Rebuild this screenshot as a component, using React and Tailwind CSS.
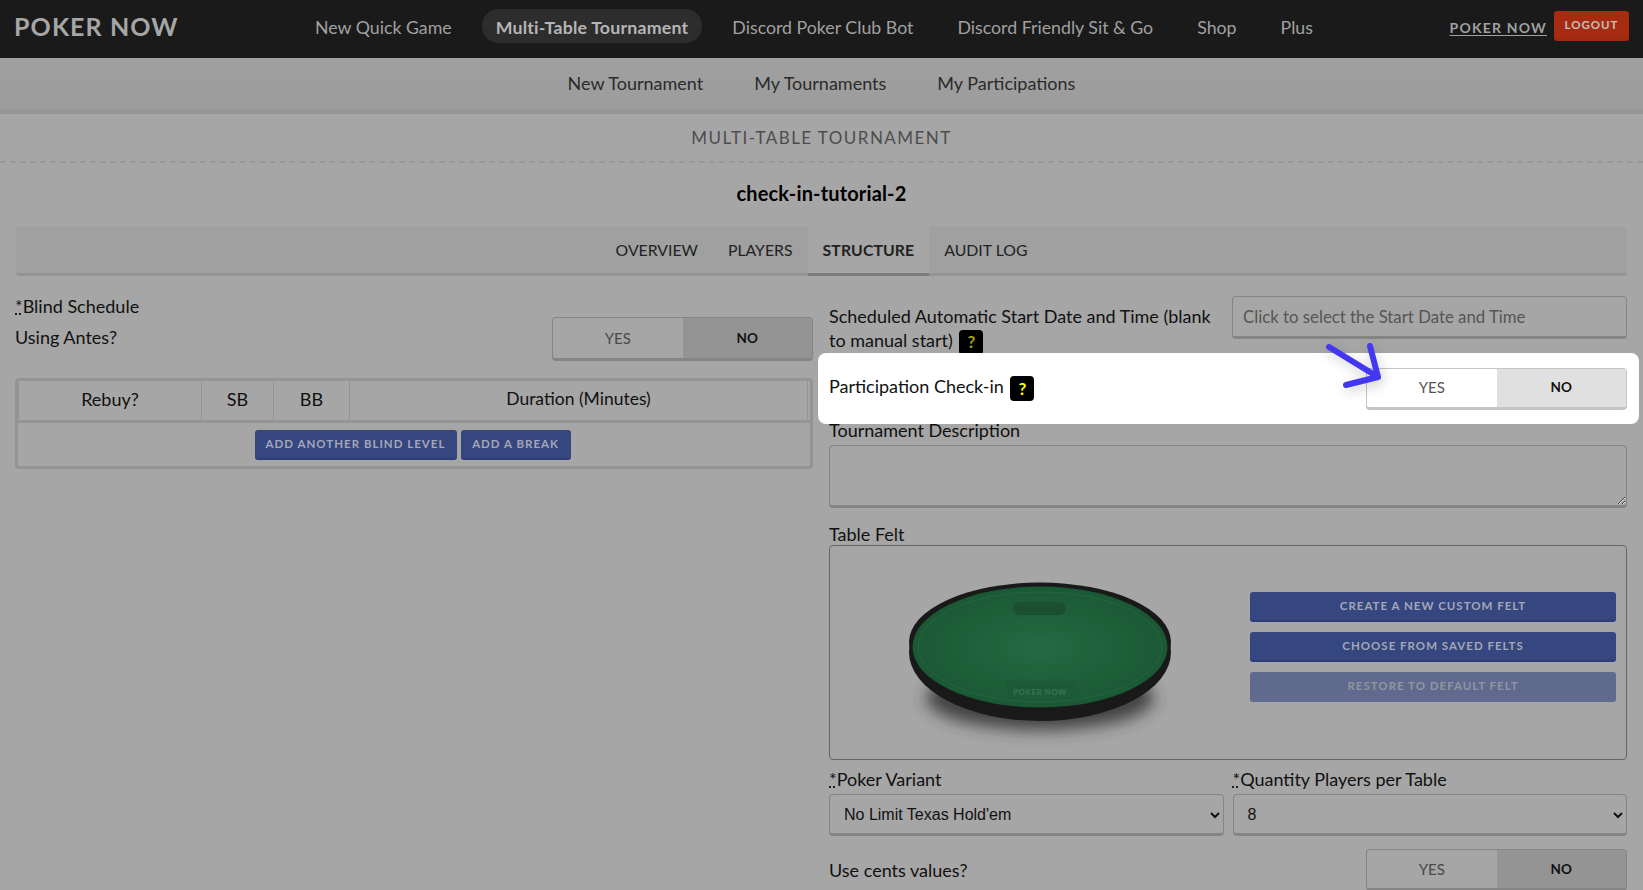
import { useState } from "react";

const navLinks = ["New Quick Game", "Multi-Table Tournament", "Discord Poker Club Bot", "Discord Friendly Sit & Go", "Shop", "Plus"];

function Toggle({ lit = false, tall = false }) {
  return (
    <div
      className={`flex w-[261px] shrink-0 overflow-hidden rounded-[4px] border border-b-[3px] ${tall ? "h-[44px]" : "h-[42px]"} ${lit ? "border-[#c4c4c4] text-[#555]" : "border-[#858585] text-[#4a4a4a]"}`}
    >
      <div className="flex flex-1 items-center justify-center text-[15px]">YES</div>
      <div className={`flex flex-1 items-center justify-center text-[13.5px] font-bold ${lit ? "bg-[#e0e0e0] text-[#111]" : "bg-[#949494] text-[#111]"}`}>NO</div>
    </div>
  );
}

function Help({ lit = false }) {
  return (
    <span className={`-my-[4px] ml-[2px] inline-flex h-[25px] w-[24px] items-center justify-center rounded-[4px] bg-black align-middle text-[17px] font-bold ${lit ? "text-[#ffff00]" : "text-[#a5a500]"}`}>?</span>
  );
}

function Req() {
  return <span className="underline decoration-dotted">*</span>;
}

function BlueButton({ children, muted = false }) {
  return (
    <div className={`flex h-[30px] items-center justify-center rounded-[3px] border-b-2 text-[11.5px] font-bold tracking-[1px] ${muted ? "border-[#636d91] bg-[#5f6a8e] text-[#92979f]" : "border-[#2e3c78] bg-[#36467f] text-[#a3a7b8]"}`}>
      {children}
    </div>
  );
}

function FeltTable() {
  return (
    <svg width="320" height="180" viewBox="0 0 320 180" className="shrink-0">
      <defs>
        <radialGradient id="felt" cx="50%" cy="50%" r="55%">
          <stop offset="0%" stopColor="#236a43" />
          <stop offset="100%" stopColor="#1a5733" />
        </radialGradient>
        <filter id="shade" x="-20%" y="-40%" width="140%" height="180%">
          <feGaussianBlur stdDeviation="8" />
        </filter>
      </defs>
      <ellipse cx="160" cy="128" rx="114" ry="32" fill="#303030" opacity="0.85" filter="url(#shade)" />
      <ellipse cx="160" cy="82" rx="131" ry="69" fill="#191919" />
      <ellipse cx="160" cy="72" rx="131" ry="59.5" fill="#191919" />
      <ellipse cx="160" cy="77" rx="127.5" ry="60.5" fill="url(#felt)" />
      <ellipse cx="160" cy="77" rx="122" ry="55" fill="none" stroke="#2a6b47" strokeWidth="1" opacity="0.6" />
      <rect x="133" y="32" width="53" height="13" rx="6.5" fill="#1b4f31" />
      <rect x="126" y="111" width="70" height="16" fill="#1d5a38" />
      <text x="160" y="125" textAnchor="middle" fontFamily="Lato, sans-serif" fontSize="8" fontWeight="700" letterSpacing="0.5" fill="#3b7355">POKER NOW</text>
    </svg>
  );
}

export default function App() {
  const [variant, setVariant] = useState("nlh");
  const [seats, setSeats] = useState("8");

  return (
    <div className="h-[890px] overflow-hidden bg-[#a6a6a6] font-[Lato,sans-serif] text-[18px] text-[#111]">
      {/* Top bar */}
      <header className="flex h-[58px] items-center bg-[#1a1a1a] pr-[14px] pb-[6px] pl-[14px]">
        <div className="w-[279px] shrink-0 text-[25px] leading-none font-bold tracking-[1.1px] text-[#a6a6a6]">POKER NOW</div>
        <nav className="flex items-center text-[17.75px]">
          {navLinks.map((link) => (
            <a
              key={link}
              className={`mx-[8px] flex h-[34px] items-center rounded-full px-[14px] pt-[2px] whitespace-nowrap ${link === "Multi-Table Tournament" ? "bg-[#2d2d2d] font-bold tracking-[0.2px] text-[#b5b5b5]" : "text-[#a0a0a0]"}`}
            >
              {link}
            </a>
          ))}
        </nav>
        <div className="ml-auto flex items-center gap-[7px]">
          <a className="pt-[2px] text-[14px] font-bold tracking-[1.2px] text-[#a0a0a0] underline underline-offset-2">POKER NOW</a>
          <div className="flex h-[30px] w-[75px] items-center justify-center rounded-[3px] border-b-2 border-[#9a2a10] bg-[#a62b10] text-[11.5px] font-bold tracking-[1px] text-[#c4c0bc]">LOGOUT</div>
        </div>
      </header>

      {/* Sub nav */}
      <div className="flex h-[56px] items-center justify-center gap-[51px] border-b-[5px] border-[#959595] bg-gradient-to-b from-[#a0a0a0] to-[#9c9c9c] text-[#2b2b2b]">
        <span>New Tournament</span>
        <span>My Tournaments</span>
        <span>My Participations</span>
      </div>

      <div className="flex h-[49px] items-center justify-center border-b-2 border-dashed border-[#989898] text-[17px] tracking-[1.45px] text-[#4d4d4d]">MULTI-TABLE TOURNAMENT</div>

      <div className="flex h-[63px] items-center justify-center pb-[3px] text-[20px] font-bold tracking-[0.15px] text-black">check-in-tutorial-2</div>

      {/* Tabs */}
      <div className="mx-[16px] flex h-[50px] justify-center rounded-[4px] border-b-[3px] border-[#949494] bg-[#a0a0a0] text-[15.8px] text-[#222]">
        <div className="flex items-center px-[15px]">OVERVIEW</div>
        <div className="flex items-center px-[15px]">PLAYERS</div>
        <div className="-mb-[3px] flex items-center border-b-[3px] border-[#7c7c7c] bg-[#a6a6a6] px-[15px] font-bold tracking-[0.1px]">STRUCTURE</div>
        <div className="flex items-center px-[15px]">AUDIT LOG</div>
      </div>

      <div className="grid grid-cols-2 gap-x-[16px] pr-[16px] pl-[15px]">
        {/* Left column */}
        <div className="pt-[20px]">
          <div className="h-[21px] leading-[21px]">
            <Req />Blind Schedule
          </div>
          <div className="flex items-center justify-between">
            <span className="pb-[3px]">Using Antes?</span>
            <Toggle tall />
          </div>
          <div className="mt-[17px] h-[91px] rounded-[4px] border-[3px] border-[#949494]">
            <div className="flex h-[42px] border-b-[3px] border-[#949494] text-center leading-[36px]">
              <div className="w-[184px] border-x border-[#949494]">Rebuy?</div>
              <div className="w-[72px] border-r border-[#949494]">SB</div>
              <div className="w-[76px] border-r border-[#949494]">BB</div>
              <div className="w-[458px] border-r border-[#949494] text-[17.5px]">Duration (Minutes)</div>
            </div>
            <div className="flex justify-center gap-[4px] pt-[7px] pr-[3px]">
              <div className="w-[202px]"><BlueButton>ADD ANOTHER BLIND LEVEL</BlueButton></div>
              <div className="w-[110px]"><BlueButton>ADD A BREAK</BlueButton></div>
            </div>
          </div>
        </div>

        {/* Right column */}
        <div>
          <div className="flex h-[77px] gap-[10px] pt-[20px]">
            <div className="w-[393px] shrink-0 pt-[8px] leading-[24px]">
              Scheduled Automatic Start Date and Time (blank to manual start) <Help />
            </div>
            <input
              placeholder="Click to select the Start Date and Time"
              className="h-[43px] min-w-0 flex-1 rounded-[4px] border border-b-[3px] border-[#858585] px-[10px] text-[16.8px] placeholder:text-[#555]"
            />
          </div>

          <div className="relative -mr-[12px] -ml-[11px] flex h-[71px] items-center justify-between rounded-[8px] bg-white pr-[12px] pl-[11px]">
            <span className="pb-[4px]">
              Participation Check-in <Help lit />
            </span>
            <Toggle lit />
            {/* tutorial arrow */}
            <svg width="70" height="60" viewBox="0 0 70 60" className="absolute top-[-20px] left-[500px] drop-shadow-[2px_4px_6px_rgba(0,0,0,0.2)]">
              <path d="M11 14 L60 44 M52 13 L60 44 M28 52 L60 44" fill="none" stroke="#4338f0" strokeWidth="6" strokeLinecap="round" strokeLinejoin="round" />
            </svg>
          </div>

          <div className="h-[21px] leading-[12px]">Tournament Description</div>
          <textarea className="block h-[63px] w-full rounded-[4px] border border-b-[3px] border-[#858585]" />

          <div className="mt-[16px] h-[21px] leading-[21px]">Table Felt</div>
          <div className="flex h-[215px] rounded-[4px] border border-[#666]">
            <div className="ml-[50px] pt-[24px]"><FeltTable /></div>
            <div className="ml-[50px] flex w-[366px] flex-col gap-[10px] pt-[46px]">
              <BlueButton>CREATE A NEW CUSTOM FELT</BlueButton>
              <BlueButton>CHOOSE FROM SAVED FELTS</BlueButton>
              <BlueButton muted>RESTORE TO DEFAULT FELT</BlueButton>
            </div>
          </div>

          <div className="mt-[7px] grid grid-cols-2 gap-x-[9px]">
            <div>
              <div className="h-[27px] leading-[24px]"><Req />Poker Variant</div>
              <select
                value={variant}
                onChange={(e) => setVariant(e.target.value)}
                className="h-[42px] w-full rounded-[4px] border border-b-[3px] border-[#858585] pl-[10px] font-['Liberation_Sans',sans-serif] text-[16px]"
              >
                <option value="nlh">No Limit Texas Hold'em</option>
              </select>
            </div>
            <div>
              <div className="h-[27px] leading-[24px]"><Req />Quantity Players per Table</div>
              <select
                value={seats}
                onChange={(e) => setSeats(e.target.value)}
                className="h-[42px] w-full rounded-[4px] border border-b-[3px] border-[#858585] pl-[10px] font-['Liberation_Sans',sans-serif] text-[16px]"
              >
                <option value="8">8</option>
              </select>
            </div>
          </div>

          <div className="mt-[13px] flex items-center justify-between">
            <span>Use cents values?</span>
            <Toggle />
          </div>
        </div>
      </div>
    </div>
  );
}
